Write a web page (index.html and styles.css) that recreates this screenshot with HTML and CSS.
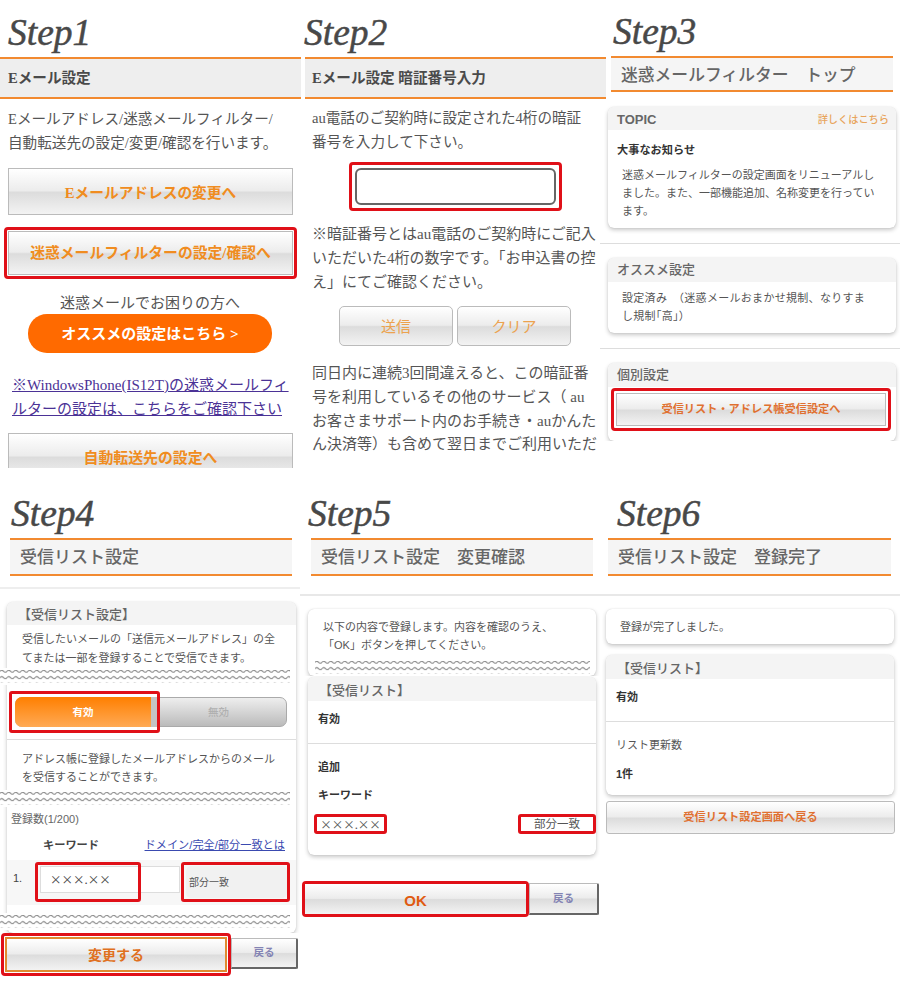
FILE: index.html
```html
<!DOCTYPE html>
<html lang="ja">
<head>
<meta charset="utf-8">
<title>受信リスト設定手順</title>
<link rel="stylesheet" href="styles.css">
</head>
<body>
<svg class="defs" width="0" height="0" aria-hidden="true"><defs><pattern id="wave" width="7" height="6.5" patternUnits="userSpaceOnUse"><path d="M0 3.2 Q1.75 1.2 3.5 3.2 T7 3.2" fill="none" stroke="#808080" stroke-width="1"/></pattern></defs></svg>
<main class="sheet">

<section class="panel p1">
  <h2 class="step">Step1</h2>
  <h3 class="bar bar-grey">Eメール設定</h3>
  <p class="copy">Eメールアドレス/迷惑メールフィルター/<br>自動転送先の設定/変更/確認を行います。</p>
  <a class="btn btn-e">Eメールアドレスの変更へ</a>
  <div class="redbox redbox-filter"><a class="btn btn-filter">迷惑メールフィルターの設定/確認へ</a></div>
  <p class="trouble">迷惑メールでお困りの方へ</p>
  <a class="pill">オススメの設定はこちら &gt;</a>
  <p class="wp"><a>※WindowsPhone(IS12T)の迷惑メールフィ<br>ルターの設定は、こちらをご確認下さい</a></p>
  <div class="cut"><a class="btn btn-forward">自動転送先の設定へ</a></div>
</section>

<section class="panel p2">
  <h2 class="step">Step2</h2>
  <h3 class="bar bar-grey">Eメール設定 暗証番号入力</h3>
  <p class="copy copy-a">au電話のご契約時に設定された4桁の暗証<br>番号を入力して下さい。</p>
  <div class="redbox redbox-pin"><div class="pin"></div></div>
  <p class="copy copy-b">※暗証番号とはau電話のご契約時にご記入<br>いただいた4桁の数字です。「お申込書の控<br>え」にてご確認ください。</p>
  <div class="pair"><a class="btn btn-soft">送信</a><a class="btn btn-soft">クリア</a></div>
  <p class="copy copy-c">同日内に連続3回間違えると、この暗証番<br>号を利用しているその他のサービス（ au<br>お客さまサポート内のお手続き・auかんた<br>ん決済等）も含めて翌日までご利用いただ</p>
</section>

<section class="panel p3 sans">
  <h2 class="step">Step3</h2>
  <h3 class="bar">迷惑メールフィルター　トップ</h3>
  <div class="card c-topic">
    <div class="head head-split"><b class="topic">TOPIC</b><a class="more">詳しくはこちら</a></div>
    <p class="notice">大事なお知らせ</p>
    <p class="small">迷惑メールフィルターの設定画面をリニューアルし<br>ました。また、一部機能追加、名称変更を行ってい<br>ます。</p>
  </div>
  <hr class="rule rule-a">
  <div class="card">
    <div class="head">オススメ設定</div>
    <p class="small small-rec">設定済み　（迷惑メールおまかせ規制、なりすま<br>し規制｢高｣）</p>
  </div>
  <hr class="rule rule-a">
  <div class="card c-open">
    <div class="head">個別設定</div>
    <div class="redbox redbox-list"><a class="btn btn-list">受信リスト・アドレス帳受信設定へ</a></div>
  </div>
</section>

<section class="panel p4 sans">
  <h2 class="step">Step4</h2>
  <h3 class="bar">受信リスト設定</h3>
  <hr class="rule rule-b">
  <div class="card c-setting">
    <div class="head head-bracket">【受信リスト設定】</div>
    <p class="small small-flush">受信したいメールの「送信元メールアドレス」の全<br>てまたは一部を登録することで受信できます。</p>
    <svg class="wavy" width="290" height="17" aria-hidden="true"><rect y="2" width="290" height="13" fill="url(#wave)"/></svg>
    <div class="toggle">
      <span class="on">有効</span><span class="off">無効</span>
      <span class="mark mark-toggle"></span>
    </div>
    <div class="divider"></div>
    <p class="small small-book">アドレス帳に登録したメールアドレスからのメール<br>を受信することができます。</p>
    <svg class="wavy wavy-b" width="290" height="17" aria-hidden="true"><rect y="2" width="290" height="13" fill="url(#wave)"/></svg>
    <p class="count">登録数(1/200)</p>
    <div class="cols"><b>キーワード</b><a>ドメイン/完全/部分一致とは</a></div>
    <div class="entry">
      <span class="num">1.</span>
      <span class="field">×××.××</span>
      <span class="select">部分一致</span>
      <span class="mark mark-field"></span>
      <span class="mark mark-select"></span>
    </div>
    <svg class="wavy wavy-c" width="290" height="17" aria-hidden="true"><rect y="2" width="290" height="13" fill="url(#wave)"/></svg>
  </div>
  <div class="actions">
    <div class="redbox redbox-change"><a class="btn btn-change">変更する</a></div>
    <a class="btn btn-back">戻る</a>
  </div>
</section>

<section class="panel p5 sans">
  <h2 class="step">Step5</h2>
  <h3 class="bar">受信リスト設定　変更確認</h3>
  <hr class="rule rule-c">
  <div class="card c-confirm">
    <p class="small small-confirm">以下の内容で登録します。内容を確認のうえ、<br>「OK」ボタンを押してください。</p>
    <svg class="wavy" width="275" height="17" aria-hidden="true"><rect y="2" width="275" height="13" fill="url(#wave)"/></svg>
  </div>
  <div class="card c-result">
    <div class="head head-bracket">【受信リスト】</div>
    <p class="strong">有効</p>
    <div class="divider divider-16"></div>
    <p class="strong strong-add">追加</p>
    <p class="strong strong-key">キーワード</p>
    <div class="hits"><span class="hit hit-k">×××.××</span><span class="hit hit-m">部分一致</span></div>
  </div>
  <div class="actions">
    <div class="redbox redbox-ok"><a class="btn btn-ok">OK</a></div>
    <a class="btn btn-back">戻る</a>
  </div>
</section>

<section class="panel p6 sans">
  <h2 class="step">Step6</h2>
  <h3 class="bar">受信リスト設定　登録完了</h3>
  <hr class="rule rule-c">
  <div class="card c-done"><p class="small small-done">登録が完了しました。</p></div>
  <div class="card c-list">
    <div class="head head-bracket">【受信リスト】</div>
    <p class="strong">有効</p>
    <div class="divider divider-16"></div>
    <p class="plain">リスト更新数</p>
    <p class="strong strong-one">1件</p>
  </div>
  <a class="btn btn-return">受信リスト設定画面へ戻る</a>
</section>

</main>
</body>
</html>
```
FILE: styles.css
```css
* { box-sizing: border-box; }
html, body { margin: 0; background: #fff; }
body { font-family: "Liberation Serif", "Noto Sans CJK JP", serif; color: #555; }
.defs { position: absolute; }
.sheet { display: grid; grid-template-columns: repeat(3, 300px); grid-template-rows: 480px 520px; width: 900px; height: 1000px; overflow: hidden; }
.panel { min-width: 0; }
.sans { font-family: "Liberation Sans", "Noto Sans CJK JP", sans-serif; }
h2, h3, p { margin: 0; font-weight: normal; }
a { display: block; }

.step { height: 49px; font: italic 37.5px/49px "Liberation Serif", serif; color: #484848; -webkit-text-stroke: .5px #484848; }
.p1, .p2 { padding-top: 8px; }
.p3 { padding-top: 7px; }
.p4, .p5, .p6 { padding-top: 9px; }
.p1 .step { margin-left: 8px; }
.p2 .step { margin-left: 4px; }
.p3 .step { margin-left: 13px; }
.p4 .step { margin-left: 11px; }
.p5 .step { margin-left: 8px; }
.p6 .step { margin-left: 17px; }

.bar { height: 38px; border-top: 2px solid #f28a30; border-bottom: 2px solid #f28a30; background: #f5f5f5; font-size: 17px; line-height: 36px; font-weight: 500; color: #666; padding-left: 10px; white-space: nowrap; }
.bar-grey { height: 42px; line-height: 38px; font-size: 14.6px; font-weight: 700; background: #eee; color: #4a4a4a; }
.p1 .bar { margin-right: -1px; padding-left: 8px; }
.p2 .bar { margin: 0 -6px 0 5px; padding-left: 7px; }
.p3 .bar { height: 36px; line-height: 35px; font-size: 16.8px; margin: 0 7px 0 11px; }
.p4 .bar { margin: 0 8px 0 10px; }
.p5 .bar { margin: 0 7px 0 11px; }
.p6 .bar { margin: 0 9px 0 8px; }

.btn { text-align: center; color: #f08c20; font-weight: 700; background: linear-gradient(#fff, #ececec 48%, #dcdcdc 52%, #f3f3f3); border: 1px solid #bbb; white-space: nowrap; }
.redbox { border: 3px solid #e01018; border-radius: 4px; background: #fff; }

.copy { font-size: 14.6px; line-height: 24px; white-space: nowrap; }
.p1 .copy { margin: 8px 0 0 8px; }
.btn-e { height: 47px; line-height: 49px; margin: 13px 7px 0 8px; font-size: 14.7px; }
.redbox-filter { height: 52px; margin: 12px 3px 0 4px; padding: 1px; }
.btn-filter { height: 44px; line-height: 42px; font-size: 14.8px; }
.trouble { margin-top: 13px; line-height: 22px; font-size: 15px; text-align: center; }
.pill { width: 244px; height: 39px; margin-left: 28px; border-radius: 19px; background: #ff6a00; color: #fff; font-weight: 700; font-size: 15px; line-height: 40px; text-align: center; }
.wp { margin: 20px 0 0 12px; font-size: 15px; line-height: 24px; white-space: nowrap; color: #4b3296; text-decoration: underline; }
.cut { height: 35px; margin: 12px 7px 0 8px; overflow: hidden; }
.btn-forward { height: 47px; line-height: 49px; font-size: 14.9px; }

.p2 .copy { margin-left: 12px; }
.p2 .copy-a { margin-top: 7px; }
.redbox-pin { width: 213px; height: 49px; margin: 8px 0 0 49px; padding: 3px; }
.pin { height: 37px; border: 2px solid #666; border-radius: 6px; background: #fff; }
.p2 .copy-b { margin-top: 11px; font-size: 15px; }
.pair { display: flex; gap: 4px; margin: 12px 0 0 39px; }
.btn-soft { width: 114px; height: 40px; line-height: 40px; border-radius: 5px; font-size: 15px; font-weight: 400; color: #eca24e; }
.p2 .copy-c { margin-top: 16px; font-size: 15px; line-height: 23.8px; }

.card { margin: 0 4px 0 8px; border-radius: 6px; background: #fff; box-shadow: 0 2px 4px rgba(0,0,0,.22), 0 0 1px rgba(0,0,0,.18); }
.head { height: 24px; padding-left: 9px; background: #f4f4f4; border-radius: 6px 6px 0 0; font-size: 13px; line-height: 24px; font-weight: 500; color: #666; }
.head-split { display: flex; justify-content: space-between; height: 23px; padding-right: 7px; line-height: 25px; }
.topic { font-size: 13px; font-weight: 700; }
.more { font-size: 10.2px; line-height: 26px; color: #e8a45c; }
.notice { margin: 11px 0 0 9px; font-size: 11.2px; line-height: 18px; font-weight: 700; color: #333; }
.small { font-size: 11px; line-height: 18px; white-space: nowrap; }
.c-topic { margin-top: 15px; padding-bottom: 8px; }
.c-topic .small { margin: 7px 0 0 14px; }
.small-rec { margin-left: 14px; padding: 7px 0 8px; letter-spacing: .3px; }
.rule { margin: 0; border: 0; height: 1px; background: #ddd; }
.rule-a { margin: 15px 0 14px; }
.rule-b { height: 2px; margin: 11px 0 13px; background: #eee; }
.rule-c { height: 2px; margin: 18px 0 13px; background: #e8e8e8; }
.c-open { height: 78px; clip-path: inset(-6px -6px 0 -6px); }
.redbox-list { height: 43px; margin: 1px 5px 0 3px; padding: 2px; }
.btn-list { height: 33px; line-height: 31px; font-size: 11.2px; color: #e07030; }

.c-setting { margin: 0 4px 0 7px; height: 331px; clip-path: inset(-6px -6px 0 -8px); }
.head-bracket { height: 24px; padding-left: 11px; line-height: 28px; }
.c-setting .head { height: 23px; line-height: 25px; }
.small-flush { margin-left: 15px; padding-top: 5px; line-height: 19px; }
.wavy { display: block; position: relative; margin: 0 0 0 -7px; background: #fff; }
.toggle { position: relative; display: flex; width: 272px; height: 30px; margin: 12px 0 12px 8px; border-radius: 7px; border: 1px solid #aaa; font-size: 10.5px; line-height: 28px; text-align: center; font-weight: 700; background: linear-gradient(#eee, #bbb); }
.on { width: 136px; margin: -1px 0 -1px -1px; line-height: 30px; color: #fff; background: linear-gradient(#ff7f00, #ffaa55); border-radius: 7px 0 0 7px; box-shadow: 6px 0 0 #c4c4c4; }
.off { flex: 1; color: #b0b0b0; font-weight: 500; }
.mark { position: absolute; border: 3px solid #e01018; border-radius: 3px; }
.mark-toggle { left: -7px; top: -7px; width: 151px; height: 42px; }
.divider { height: 1px; background: #ddd; }
.small-book { margin-left: 15px; padding-top: 10px; }
.wavy-b { margin-top: 4px; }
.count { margin: 4px 0 0 4px; font-size: 11px; line-height: 16px; color: #666; white-space: nowrap; }
.cols { display: flex; justify-content: space-between; margin: 10px 11px 0 36px; font-size: 11.2px; line-height: 16px; }
.cols b { color: #444; }
.cols a { color: #3a4ab0; text-decoration: underline; }
.entry { position: relative; height: 45px; margin-top: 7px; background: #f7f7f7; }
.num { position: absolute; left: 6px; top: 10px; font-size: 11px; line-height: 16px; font-weight: 500; color: #444; }
.field { position: absolute; left: 33px; top: 6px; width: 140px; height: 27px; padding-left: 9px; background: #fff; border: 1px solid #ddd; color: #444; font: 11.5px/25px "Noto Sans CJK JP", sans-serif; }
.select { position: absolute; left: 179px; top: 6px; width: 101px; height: 32px; padding-left: 3px; background: #f1f1f1; border-radius: 5px; font-size: 10px; line-height: 33px; white-space: nowrap; }
.mark-field { left: 28px; top: 2px; width: 106px; height: 40px; }
.mark-select { left: 174px; top: 2px; width: 109px; height: 40px; }
.wavy-c { margin-top: 8px; }

.actions { display: flex; align-items: flex-start; }
.p4 .actions { margin-left: 1px; }
.redbox-change { width: 230px; height: 43px; padding: 1px; }
.btn-change { height: 35px; line-height: 33px; border: 2px solid #e08a30; font-size: 14px; color: #e07020; }
.btn-back { flex: none; width: 67px; height: 31px; margin-top: 5px; line-height: 27px; border: 1px solid #bbb; border-right: 2px solid #666; border-bottom: 2px solid #666; font-size: 10.5px; color: #8383b3; border-radius: 0 2px 2px 0; }

.p5 .card { margin: 0 4px 0 8px; }
.c-confirm { height: 67px; clip-path: inset(-6px -6px 0 -6px); }
.small-confirm { margin-left: 15px; padding-top: 9px; }
.c-confirm .wavy { margin: 5px 0 0 7px; }
.p5 .c-result { margin-top: 1px; padding-bottom: 21px; }
.strong { margin: 10px 0 0 10px; font-size: 11px; line-height: 16px; font-weight: 700; color: #333; }
.divider-16 { margin-top: 16px; }
.strong-add { margin-top: 15px; }
.strong-key { margin-top: 12px; }
.hits { display: flex; justify-content: space-between; margin: 11px 0 0 6px; }
.hit { height: 20px; border: 3px solid #e01018; border-radius: 3px; white-space: nowrap; text-align: center; }
.hit-k { width: 73px; font: 11.5px/14px "Noto Sans CJK JP", sans-serif; }
.hit-m { width: 78px; font-size: 11.5px; line-height: 14px; }
.p5 .actions { margin: 26px 0 0 2px; }
.redbox-ok { width: 227px; height: 36px; padding: 0; }
.btn-ok { height: 30px; line-height: 34px; border: 0; font-size: 15px; color: #e05a10; font-family: "Liberation Sans", sans-serif; }
.p5 .btn-back { width: 70px; height: 32px; margin-top: 2px; line-height: 28px; }

.p6 .card { margin: 0 6px 0 6px; }
.c-done { height: 35px; }
.small-done { margin-left: 14px; padding-top: 9px; }
.p6 .c-list { margin-top: 11px; padding-bottom: 13px; }
.plain { margin: 15px 0 0 10px; font-size: 11px; line-height: 16px; }
.strong-one { margin-top: 13px; }
.btn-return { height: 33px; margin: 6px 5px 0 6px; line-height: 31px; border-radius: 3px; font-size: 11.2px; color: #e07030; }
```
